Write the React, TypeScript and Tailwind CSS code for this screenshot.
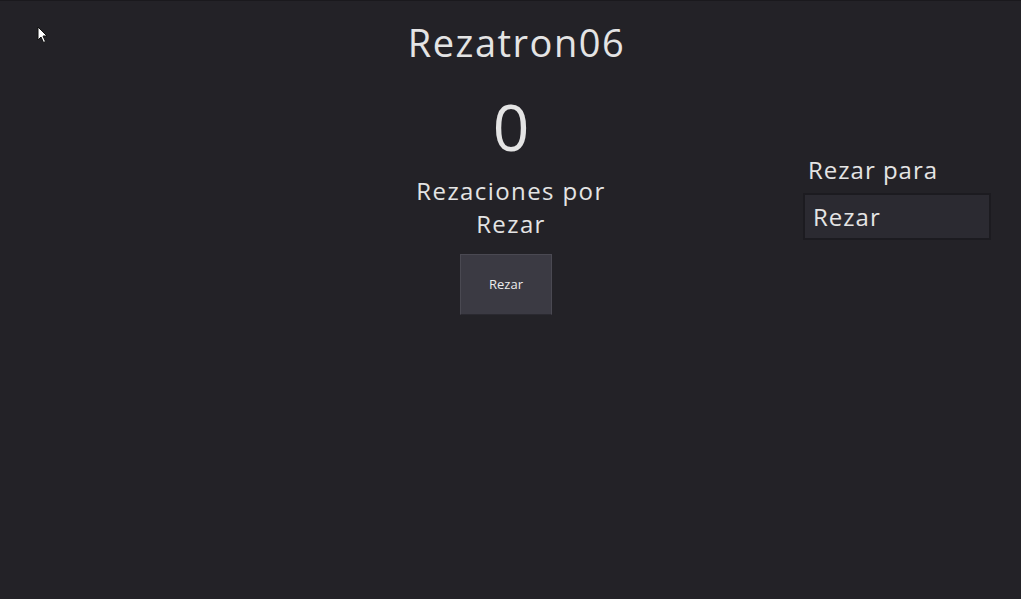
export default function App() {
  const font = { fontFamily: '"Open Sans", "DejaVu Sans", sans-serif' };
  return (
    <div
      className="relative w-[1021px] h-[599px] overflow-hidden bg-[#232227] border-t border-[#1a191d] text-[#e4e4e4]"
      style={font}
    >
      {/* mouse pointer */}
      <svg className="absolute left-[37px] top-[25px]" width="12" height="18" viewBox="0 0 12 18">
        <path d="M1 1 L1 14 L4 11 L6.5 16.5 L8.5 15.5 L6 10 L10 10 Z" fill="#fff" stroke="#111" strokeWidth="1" />
      </svg>

      <h1 className="text-center text-[38px] leading-none tracking-[1.5px] pt-[22px] pl-[12px]">Rezatron06</h1>

      <div className="grid grid-cols-[361px_300px_1fr] mt-[34px]">
        <div />
        <div className="flex flex-col items-center">
          <div className="text-[64px] leading-none">0</div>
          <div className="mt-[15px] text-[24px] leading-[33px] tracking-[1.4px] text-center">
            Rezaciones por
            <br />
            Rezar
          </div>
          <button className="mt-[14px] w-[92px] h-[61px] bg-[#3b3a43] border border-[#4a4952] border-b-[#2a2930] text-[13px] text-[#ececec] -ml-[10px]">
            Rezar
          </button>
        </div>
        <div className="flex justify-end pr-[30px]">
          <div className="w-[188px] mt-[63px]">
            <div className="pl-[5px] text-[24px] leading-none tracking-[1px]">Rezar para</div>
            <div className="mt-[11px] h-[47px] bg-[#2b2a31] border-2 border-[#1c1b20] flex items-center pl-[8px] text-[24px] tracking-[1px]">
              Rezar
            </div>
          </div>
        </div>
      </div>
    </div>
  );
}
